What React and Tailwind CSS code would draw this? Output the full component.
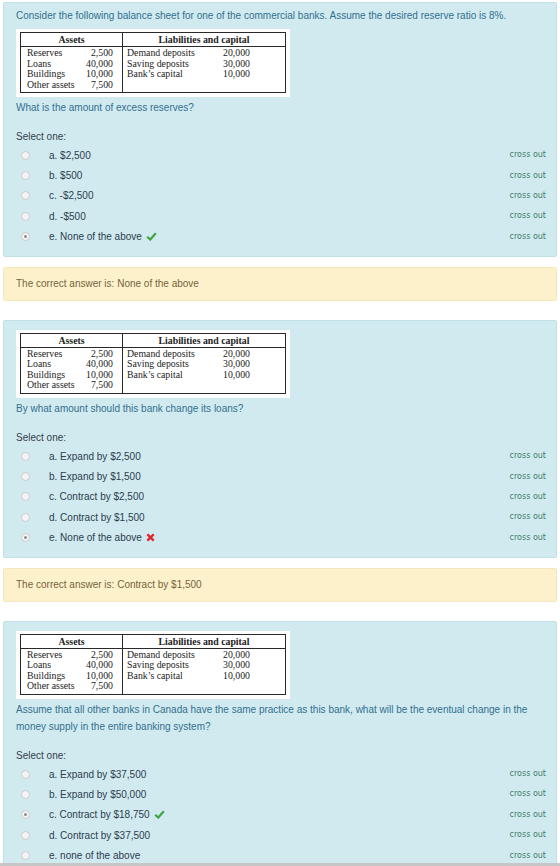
import React from "react";

const assets = [
  ["Reserves", "2,500"],
  ["Loans", "40,000"],
  ["Buildings", "10,000"],
  ["Other assets", "7,500"],
];

const liabilities = [
  ["Demand deposits", "20,000"],
  ["Saving deposits", "30,000"],
  ["Bank\u2019s capital", "10,000"],
];

const questions = [
  {
    intro:
      "Consider the following balance sheet for one of the commercial banks. Assume the desired reserve ratio is 8%.",
    text: "What is the amount of excess reserves?",
    options: ["a. $2,500", "b. $500", "c. -$2,500", "d. -$500", "e. None of the above"],
    picked: 4,
    mark: "right",
    answer: "None of the above",
  },
  {
    text: "By what amount should this bank change its loans?",
    options: [
      "a. Expand by $2,500",
      "b. Expand by $1,500",
      "c. Contract by $2,500",
      "d. Contract by $1,500",
      "e. None of the above",
    ],
    picked: 4,
    mark: "wrong",
    answer: "Contract by $1,500",
  },
  {
    text: "Assume that all other banks in Canada have the same practice as this bank, what will be the eventual change in the money supply in the entire banking system?",
    options: [
      "a. Expand by $37,500",
      "b. Expand by $50,000",
      "c. Contract by $18,750",
      "d. Contract by $37,500",
      "e. none of the above",
    ],
    picked: 2,
    mark: "right",
  },
];

const BalanceSheet = () => (
  <div className="mt-[5px] w-[274px] bg-white px-[4px] pb-[4px] pt-[3px]">
    <div className="flex border border-[#2a2a2a] font-['Liberation_Serif',serif] text-[9.8px] leading-[10.5px] text-[#222]">
      <div className="w-[102px] border-r border-[#2a2a2a]">
        <div className="border-b border-[#2a2a2a] pt-[1px] text-center font-bold leading-[12px]">
          Assets
        </div>
        <div className="pb-[2px] pt-[1px]">
          {assets.map(([label, value]) => (
            <div key={label} className="flex justify-between pl-[6px] pr-[9px]">
              <span>{label}</span>
              <span>{value}</span>
            </div>
          ))}
        </div>
      </div>
      <div className="flex-1">
        <div className="border-b border-[#2a2a2a] pt-[1px] text-center font-bold leading-[12px]">
          Liabilities and capital
        </div>
        <div className="pt-[1px]">
          {liabilities.map(([label, value]) => (
            <div key={label} className="flex justify-between pl-[4px] pr-[35px]">
              <span>{label}</span>
              <span>{value}</span>
            </div>
          ))}
        </div>
      </div>
    </div>
  </div>
);

const Radio = ({ checked }) => (
  <span className="flex h-[9px] w-[9px] shrink-0 items-center justify-center rounded-full border border-[#cbcbcb] bg-[#f4f4f4]">
    {checked && <span className="h-[3px] w-[3px] rounded-full bg-[#8c8c8c]" />}
  </span>
);

const RightMark = () => (
  <svg width="11" height="9" viewBox="0 0 12 10" className="ml-[4px]">
    <path d="M1.2 5.2 L4.6 8.4 L10.8 1.4" stroke="#3da53d" strokeWidth="2.4" fill="none" />
  </svg>
);

const WrongMark = () => (
  <svg width="9" height="9" viewBox="0 0 10 10" className="ml-[4px]">
    <path d="M1.5 1.5 L8.5 8.5 M8.5 1.5 L1.5 8.5" stroke="#e0262c" strokeWidth="2.6" />
  </svg>
);

const Question = ({ q }) => (
  <div className="rounded-[2px] border border-[#bfe0e8] bg-[#d1eaf0] pb-[9px] pl-[12px] pr-[10px] pt-[4px]">
    {q.intro && <p className="leading-[17px] text-[#31708f]">{q.intro}</p>}
    <BalanceSheet />
    <p className="mt-[2px] leading-[17px] text-[#31708f]">{q.text}</p>
    <p className="mt-[12px] leading-[17px] text-[#34404b]">Select one:</p>
    <div>
      {q.options.map((opt, i) => (
        <div key={opt} className="flex h-[20.4px] items-center pl-[5px] text-[#2c3d4e]">
          <Radio checked={q.picked === i} />
          <span className="ml-[19px]">{opt}</span>
          {q.picked === i && (q.mark === "right" ? <RightMark /> : <WrongMark />)}
          <span className="ml-auto font-['DejaVu_Sans',sans-serif] text-[8px] text-[#3f7f69]">
            cross out
          </span>
        </div>
      ))}
    </div>
  </div>
);

const Outcome = ({ answer }) => (
  <div className="mt-[10px] flex h-[34px] items-center rounded-[2px] border border-[#f6e6bd] bg-[#fdf1cc] px-[12px] text-[#76633a]">
    The correct answer is: {answer}
  </div>
);

export default function App() {
  return (
    <div className="flex h-[866px] flex-col overflow-hidden bg-white font-['Liberation_Sans',Arial,sans-serif] text-[10px]">
      <div className="min-h-0 flex-1 overflow-hidden px-[3px] pt-[2px]">
        {questions.map((q, i) => (
          <div key={i} className={i > 0 ? "mt-[19px]" : ""}>
            <Question q={q} />
            {q.answer && <Outcome answer={q.answer} />}
          </div>
        ))}
      </div>
      <div className="h-[3px] shrink-0 bg-[#c6c6c6]" />
    </div>
  );
}
